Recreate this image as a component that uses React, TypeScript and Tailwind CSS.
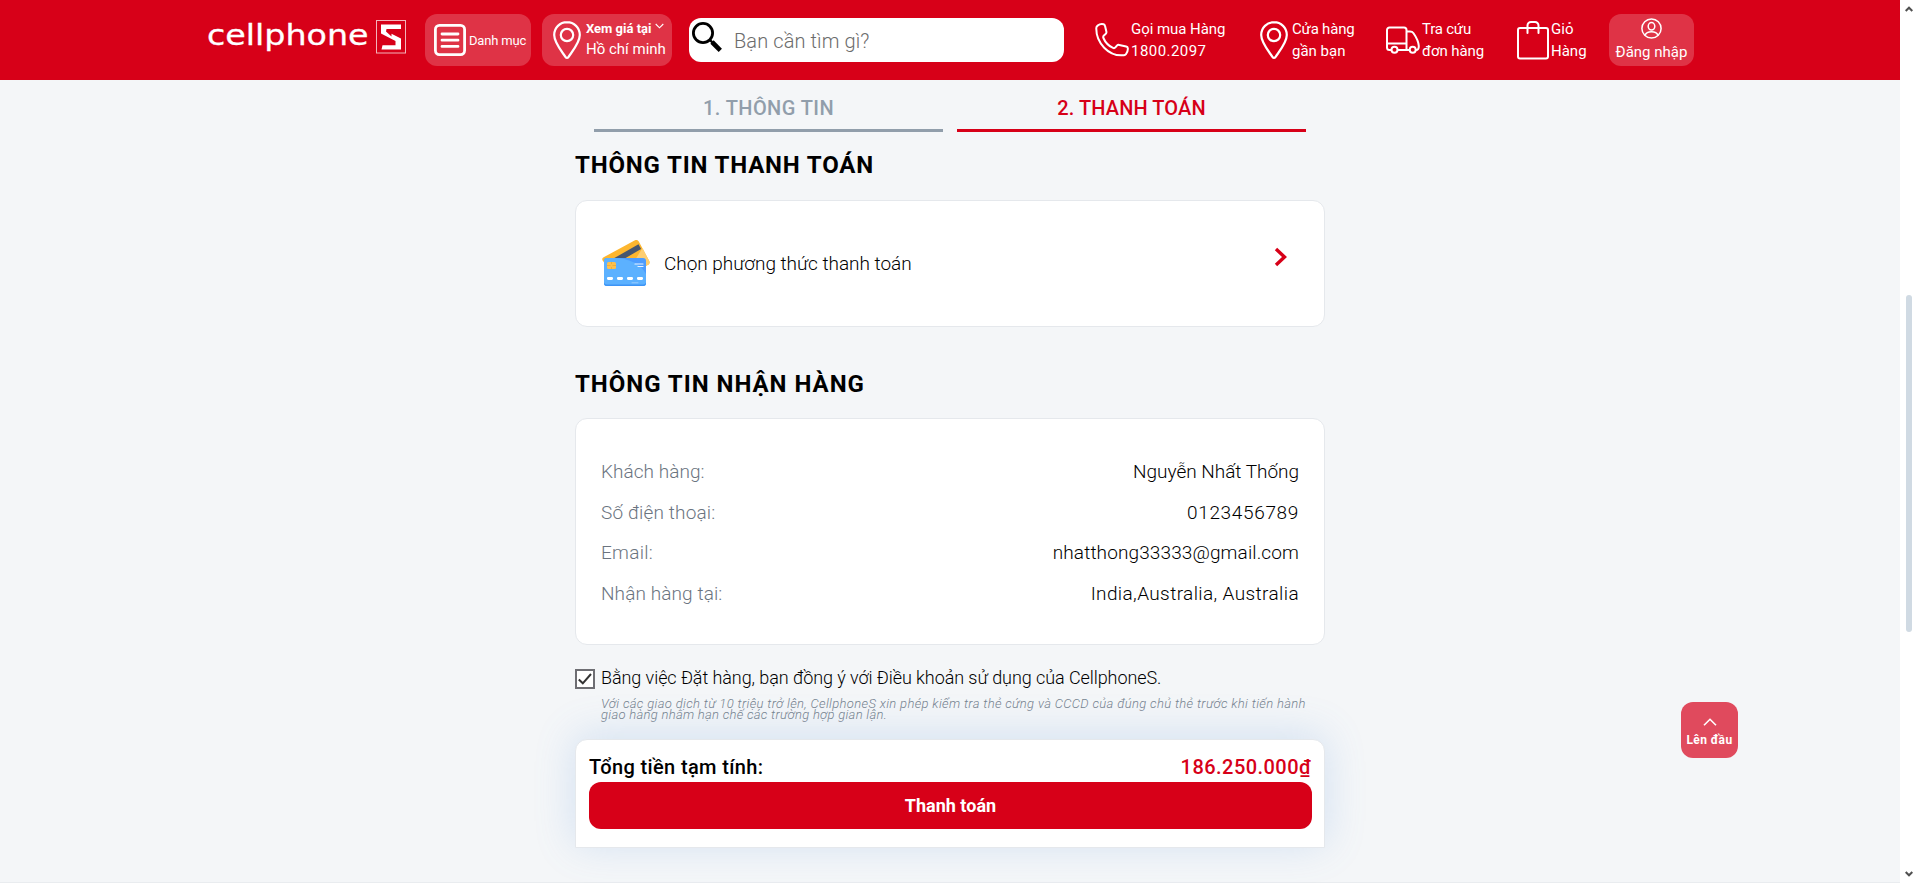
import React from "react";

const glass = "rounded-xl bg-white/20 text-white";

function Pin() {
  return (
    <svg className="h-[38px] w-[28px] shrink-0" viewBox="0 0 28 38" fill="none" stroke="#fff" strokeWidth="2.200" strokeLinejoin="round">
      <path d="M14 1.200C6.900 1.200 1.200 6.800 1.200 14c0 7.500 6.900 15.500 11.400 22.100.7 1 2.100 1 2.800 0C19.900 29.500 26.800 21.500 26.800 14 26.800 6.800 21.100 1.200 14 1.200Z" />
      <circle cx="14" cy="14" r="6.200" />
    </svg>
  );
}

function Phone() {
  return (
    <svg className="h-[34px] w-[34px] shrink-0" viewBox="0 0 34 34" fill="none" stroke="#fff" strokeWidth="2" strokeLinejoin="round">
      <path d="M2.600 2.600C4.500 1.100 7 .8 8.700 1.300c.9.300 1.200 1 1.400 1.900l1.300 5.600c.2 1-.1 1.700-.8 2.300l-1.700 1.500c-.8.7-.9 1.400-.5 2.400 1.800 4.200 5.200 7.900 9.600 9.900 1 .5 1.700.3 2.400-.5l1.500-1.700c.6-.7 1.300-1 2.300-.8l7 1.500c1 .2 1.500.8 1.600 1.700.2 1.900-.3 4.300-1.800 6-.6.700-1.200 1-2 1.100C13.500 34 .9 19.500 1.300 5c0-1 .5-1.800 1.300-2.400Z" />
    </svg>
  );
}

function Truck() {
  return (
    <svg className="h-[28px] w-[34px] shrink-0" viewBox="0 0 34 28" fill="none" stroke="#fff" strokeWidth="2" strokeLinejoin="round">
      <path d="M5.500 24H3.500A2.500 2.500 0 0 1 1 21.500V4a2.500 2.500 0 0 1 2.500-2.500H18A2.500 2.500 0 0 1 20.500 4v20H11.500M1 17.500H20.500M20.500 5.500H24c1.500 0 2.700.5 3.500 1.700C30.500 11.500 32.500 15.500 32.800 20c.1 2.500-.8 4-2.800 4M20.500 24H23.500" />
      <circle cx="8.500" cy="23.700" r="3" />
      <circle cx="26.700" cy="23.700" r="3" />
    </svg>
  );
}

function Bag() {
  return (
    <svg className="h-[39px] w-[32px] shrink-0" viewBox="0 0 32 39" fill="none" stroke="#fff" strokeWidth="2" strokeLinejoin="round" strokeLinecap="round">
      <rect x="1" y="7" width="30" height="30.500" rx="2" />
      <path d="M10.500 12V4.500A3.500 3.500 0 0 1 14 1h4a3.500 3.500 0 0 1 3.500 3.500V12" />
    </svg>
  );
}

function Logo() {
  return (
    <div className="mb-[6px] flex h-[34px] w-[198px] shrink-0 items-start">
      <div className="w-[168px] shrink-0">
        <span className="-ml-px block origin-left scale-x-[1.19] font-['DejaVu_Sans',sans-serif] text-[28px] leading-[31px] whitespace-nowrap text-white [-webkit-text-stroke:0.300px_#fff]">
          cellphone
        </span>
      </div>
      <svg className="h-[34px] w-[30px] shrink-0" viewBox="0 0 30 34" fill="none">
        <rect x="0.500" y="0.500" width="29" height="32.500" stroke="#fff" strokeOpacity=".7" />
        <path d="M5 4.500H25V9H10.500L10 11.500L15.500 16.500L15.500 13.800L25 18.500V29.500H5.500L6.500 25.300H19.500V21L5 13.500Z" fill="#fff" />
      </svg>
    </div>
  );
}

function CardsIcon() {
  return (
    <svg className="mb-[2px] h-[48px] w-[48px] shrink-0" viewBox="0 0 48 48">
      <path d="M1.200 18.500 33 1.300c1.500-.8 3-.3 3.800 1.200L47.200 22c.8 1.500.3 3-1.100 3.800L16 42 .6 21.500c-.6-1.200-.5-2.400.6-3Z" fill="#fdb62f" />
      <path d="M20 42 40.500 9 47.200 22c.8 1.500.3 3-1.100 3.800Z" fill="#fdce72" />
      <path d="M8 21.500 36.500 5.300l2.600 4.700L15 24Z" fill="#47566f" />
      <rect x="2" y="19" width="42" height="28" rx="3" fill="#4c9cff" />
      <path d="M2 22a3 3 0 0 1 3-3h7c14 0 27 6 32 16v9a3 3 0 0 1-3 3H5a3 3 0 0 1-3-3Z" fill="#5cb1ff" />
      <path d="M2 43.500V44a3 3 0 0 0 3 3H41a3 3 0 0 0 3-3v-.5a3 3 0 0 1-3 2H5a3 3 0 0 1-3-2Z" fill="#3d94f5" />
      <rect x="5" y="23" width="9" height="7" rx="1.500" fill="#fdc04d" />
      <path d="M5 26.500h3.500M10.500 26.500H14M9.500 23v2M9.500 28v2" stroke="#e9a52f" strokeWidth=".7" />
      <path d="M33 25h8M36 27.500h5" stroke="#e9f4ff" strokeWidth="1.200" strokeLinecap="round" />
      <path d="M6.300 39.500h3.400M16.300 39.500h3.400M26.300 39.500h3.400M36.300 39.500h3.400" stroke="#fff" strokeWidth="2.800" strokeLinecap="round" />
      <path d="M30 43.800h6" stroke="#a9d4ff" strokeWidth=".8" strokeLinecap="round" />
    </svg>
  );
}

const rows = [
  { label: "Khách hàng:", value: "Nguyễn Nhất Thống", l: "tracking-[0.05px]", v: "tracking-[-0.02px]" },
  { label: "Số điện thoại:", value: "0123456789", l: "tracking-[0.15px]", v: "tracking-[0.66px]" },
  { label: "Email:", value: "nhatthong33333@gmail.com", l: "tracking-[0.27px]", v: "tracking-[0.12px]" },
  { label: "Nhận hàng tại:", value: "India,Australia, Australia", l: "tracking-[0.1px]", v: "tracking-[0.39px]" },
];

const two = "flex flex-col items-start text-[15px] leading-[22px] whitespace-nowrap";

function Header() {
  return (
    <header className="flex h-20 shrink-0 items-center bg-[#d70018] pl-[208px] text-white">
      <Logo />
      <div className={"ml-[19px] flex h-[52px] w-[106px] shrink-0 items-center pl-[9px] " + glass}>
        <svg className="h-8 w-8 shrink-0" viewBox="0 0 32 32" fill="none" stroke="#fff" strokeWidth="2.800" strokeLinecap="round">
          <rect x="1.400" y="1.400" width="29.200" height="29.200" rx="4" />
          <path d="M8 10h16M8 16.200h16M8 22.400h16" />
        </svg>
        <span className="mt-px ml-[3px] text-[13px] tracking-[-0.19px] whitespace-nowrap">Danh mục</span>
      </div>
      <div className={"ml-[11px] flex h-[52px] w-[130px] shrink-0 items-center pl-[11px] " + glass}>
        <Pin />
        <div className="ml-[5px] flex flex-col whitespace-nowrap">
          <div className="flex h-5 items-center">
            <span className="text-[13px] font-bold">Xem giá tại</span>
            <svg className="mb-[6px] ml-1 h-[6px] w-[9px]" viewBox="0 0 9 6" fill="none" stroke="#fff" strokeWidth="1.100">
              <path d="M.7 1 4.500 4.800 8.300 1" />
            </svg>
          </div>
          <span className="mb-px text-[15px] leading-[21px]">Hồ chí minh</span>
        </div>
      </div>
      <div className="ml-[17px] flex h-11 w-[375px] shrink-0 items-center rounded-xl bg-white pl-[3px]">
        <svg className="mb-[7px] h-[30px] w-[30px] shrink-0" viewBox="0 0 30 30" fill="none" stroke="#000">
          <circle cx="11" cy="11" r="9.600" strokeWidth="2.800" />
          <path d="M17.800 17.800 21.500 21.500" strokeWidth="2.400" />
          <path d="M20 20 28.300 28.300" strokeWidth="4.600" />
        </svg>
        <span className="mt-px ml-[12px] text-[20px] font-light tracking-[0.1px] whitespace-nowrap text-[#6c6c6c]">Bạn cần tìm gì?</span>
      </div>
      <div className="ml-[31px] flex w-[165px] shrink-0 items-center">
        <Phone />
        <div className={"ml-[2px] " + two}>
          <span className="tracking-[-0.05px]">Gọi mua Hàng</span>
          <span className="tracking-[0.45px]">1800.2097</span>
        </div>
      </div>
      <div className="flex w-[126px] shrink-0 items-center">
        <Pin />
        <div className={"ml-[4px] " + two}>
          <span className="tracking-[-0.2px]">Cửa hàng</span>
          <span>gần bạn</span>
        </div>
      </div>
      <div className="flex w-[131px] shrink-0 items-center">
        <Truck />
        <div className={"ml-[2px] " + two}>
          <span className="tracking-[-0.21px]">Tra cứu</span>
          <span className="tracking-[-0.08px]">đơn hàng</span>
        </div>
      </div>
      <div className="flex w-[92px] shrink-0 items-center">
        <Bag />
        <div className={"ml-[2px] " + two}>
          <span className="tracking-[0.1px]">Giỏ</span>
          <span>Hàng</span>
        </div>
      </div>
      <div className={"flex h-[52px] w-[85px] shrink-0 flex-col items-center pt-1 " + glass}>
        <svg className="h-[21px] w-[21px]" viewBox="0 0 21 21" fill="none" stroke="#fff" strokeWidth="1.500">
          <circle cx="10.500" cy="10.500" r="9.600" />
          <ellipse cx="10.500" cy="8.300" rx="3.300" ry="3.700" />
          <path d="M4 17.500C5 14.800 7.500 13.800 10.500 13.800s5.500 1 6.500 3.700" />
        </svg>
        <span className="mt-[3px] text-[15px] leading-[20px] whitespace-nowrap">Đăng nhập</span>
      </div>
    </header>
  );
}

function Heading({ children }: { children: React.ReactNode }) {
  return <h2 className="text-[24px] leading-8 font-bold">{children}</h2>;
}

export default function App() {
  return (
    <div className="flex h-[883px] w-[1918px] overflow-hidden bg-white font-['Roboto',sans-serif] text-black">
      <div className="flex w-[1900px] shrink-0 flex-col border-b border-[#e9ecef] bg-[#f4f6f8]">
        <Header />
        <div className="flex flex-1">
          <main className="ml-[575px] w-[750px] shrink-0">
            <div className="flex gap-[14px] px-[19px] text-center text-[20px] leading-6 font-medium">
              <div className="h-[52px] w-[349px] border-b-3 border-[#919eab] pt-4 tracking-[0.42px] text-[#919eab]">1. THÔNG TIN</div>
              <div className="h-[52px] w-[349px] border-b-3 border-[#d70018] pt-4 tracking-[0.1px] text-[#d70018]">2. THANH TOÁN</div>
            </div>

            <div className="mt-[17px] tracking-[0.83px]">
              <Heading>THÔNG TIN THANH TOÁN</Heading>
            </div>
            <section className="mt-[19px] flex h-[127px] items-center rounded-xl border border-[#e5e8ec] bg-white pr-[36px] pl-[26px]">
              <CardsIcon />
              <span className="mt-[2px] ml-[14px] flex-1 text-[19px] font-light tracking-[-0.03px]">Chọn phương thức thanh toán</span>
              <svg className="mb-[13px] h-[20px] w-[14px]" viewBox="0 0 14 20" fill="none" stroke="#d70018" strokeWidth="3.400">
                <path d="M2 2 10.500 10 2 18" />
              </svg>
            </section>

            <div className="mt-[41px] tracking-[0.970px]">
              <Heading>THÔNG TIN NHẬN HÀNG</Heading>
            </div>
            <section className="mt-[18px] h-[227px] rounded-xl border border-[#e5e8ec] bg-white px-[25px] pt-[33px]">
              {rows.map((r) => (
                <div key={r.label} className="flex justify-between text-[19px] leading-[40.600px] font-light">
                  <span className={"text-[#6b7480] " + r.l}>{r.label}</span>
                  <span className={r.v}>{r.value}</span>
                </div>
              ))}
            </section>

            <div className="mt-[23px] flex h-[22px] items-center">
              <span className="flex h-5 w-5 items-center justify-center border-2 border-[#6e6e73] bg-white">
                <svg className="h-[14px] w-[14px]" viewBox="0 0 14 14" fill="none" stroke="#333" strokeWidth="2">
                  <path d="M.8 7.500 4.800 11.300 13 2" />
                </svg>
              </span>
              <span className="mb-[2px] ml-[6px] text-[18px] leading-5 font-light tracking-[-0.075px] whitespace-nowrap">
                Bằng việc Đặt hàng, bạn đồng ý với Điều khoản sử dụng của CellphoneS.
              </span>
            </div>
            <p className="mt-[8px] ml-[26px] text-[13px] leading-[11px] font-light whitespace-nowrap text-[#75828f] italic">
              <span className="block tracking-[0.34px]">
                Với các giao dịch từ 10 triệu trở lên, CellphoneS xin phép kiểm tra thẻ cứng và CCCD của đúng chủ thẻ trước khi tiến hành
              </span>
              <span className="block tracking-[0.29px]">giao hàng nhằm hạn chế các trường hợp gian lận.</span>
            </p>

            <section className="mt-[19px] h-[109px] rounded-t-xl border border-[#e5e8ec] bg-white px-[13px] pt-[15px] shadow-[0_-4px_40px_rgba(93,148,222,0.220)]">
              <div className="flex justify-between text-[20px] leading-6 font-medium">
                <span className="tracking-[0.37px]">Tổng tiền tạm tính:</span>
                <span className="tracking-[0.45px] text-[#d70018]">186.250.000₫</span>
              </div>
              <button className="mt-[3px] block h-[47px] w-[723px] rounded-xl bg-[#d70018] text-[18px] font-bold text-white">Thanh toán</button>
            </section>
          </main>
          <button className="mt-[622px] ml-[356px] flex h-[56px] w-[57px] flex-col items-center rounded-xl bg-[#e04a5d] pt-4 text-[12px] leading-[14px] font-bold tracking-[0.37px] text-white">
            <svg className="h-[8px] w-[14px]" viewBox="0 0 14 8" fill="none" stroke="#fff" strokeWidth="1.600">
              <path d="M1 7.300 7 1.300 13 7.300" />
            </svg>
            <span className="mt-[7px] whitespace-nowrap">Lên đầu</span>
          </button>
        </div>
      </div>
      <div className="flex flex-1 flex-col items-center bg-white">
        <svg className="mt-[6px] h-[6px] w-2" viewBox="0 0 8 6" fill="none" stroke="#505050" strokeWidth="2">
          <path d="M.7 5 4 1.700 7.300 5" />
        </svg>
        <div className="mt-[283px] h-[337px] w-[6px] rounded-full bg-[#d0dae3]" />
        <svg className="mt-[239px] h-[6px] w-2" viewBox="0 0 8 6" fill="none" stroke="#505050" strokeWidth="2">
          <path d="M.7 1 4 4.300 7.300 1" />
        </svg>
      </div>
    </div>
  );
}
